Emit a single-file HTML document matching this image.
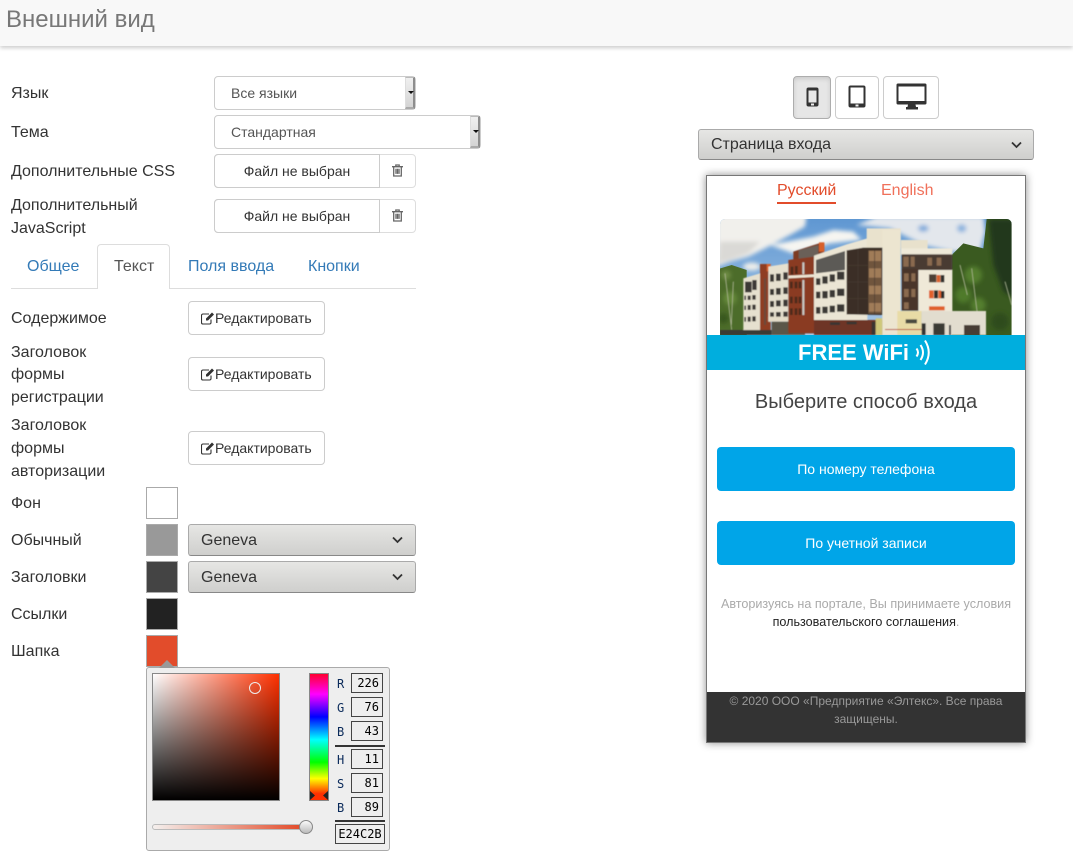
<!DOCTYPE html>
<html lang="ru"><head><meta charset="utf-8"><title>Внешний вид</title>
<style>
*{box-sizing:border-box}
html,body{margin:0;padding:0;width:1073px;height:852px;overflow:hidden;background:#fff;font-family:"Liberation Sans","DejaVu Sans",sans-serif;color:#333}
.a{position:absolute;white-space:nowrap}
.l{font-size:16px;line-height:23px;color:#333;left:11px}
.sel{position:absolute;left:214px;background:#fff;border:1px solid #ccc;border-radius:4px;height:34px;font-size:14px;line-height:32px;color:#555;padding-left:16px}
.sb{position:absolute;top:0;right:0;width:10px;height:32px;background:linear-gradient(#f0f0f0,#d4d4d4);border-right:2px solid #8d8d8d;border-bottom:2px solid #aaa;border-left:1px solid #ddd;border-top:1px solid #bbb}
.sb:after{content:"";position:absolute;left:1.5px;top:13px;border:3px solid transparent;border-top:3px solid #111;border-bottom:0}
.file{position:absolute;left:214px;width:202px;height:34px;background:#fff;border:1px solid #ddd;border-radius:4px}
.file b{position:absolute;left:0;top:-1px;height:34px;border:1px solid #ccc;border-radius:4px 0 0 4px;margin-left:-1px;font-weight:400;font-size:14px;line-height:32px;text-align:center;color:#333;width:166px}
.file svg{position:absolute;left:177px;top:9px}
.edit{position:absolute;left:188px;width:137px;height:34px;border:1px solid #ccc;border-radius:4px;font-size:14px;line-height:32px;color:#333;background:#fff;padding-left:26px}
.edit svg{position:absolute;left:12px;top:9px}
.sw{position:absolute;left:146px;width:32px;height:32px;border:1px solid #aaa}
.gs{position:absolute;background:linear-gradient(#e6e6e4,#cfcfcd);border:1px solid #aaa;border-bottom-color:#888;border-radius:3px;font-size:16px;color:#333;padding-left:12px}
.gs svg{position:absolute;right:12px;top:50%;margin-top:-4px}
.tab{position:absolute;top:258px;font-size:16px;line-height:18px;color:#337ab7}
.dev{position:absolute;top:76px;height:43px;border:1px solid #ccc;border-radius:4px;background:#fff}
.nl{position:absolute;left:337px;width:12px;font-family:"DejaVu Sans Mono",monospace;font-size:12px;line-height:14px;color:#0a2a5a}
.nb{position:absolute;left:351px;width:32px;height:20px;border:1px solid #444;background:#eee;font-family:"DejaVu Sans Mono",monospace;font-size:12px;line-height:18px;text-align:right;padding-right:3px;color:#000}
</style></head><body>

<div class="a" style="left:0;top:0;width:1073px;height:46px;background:#f8f8f8;box-shadow:0 2px 4px rgba(0,0,0,.2)"></div>
<div class="a" style="left:6px;top:6px;font-size:24px;line-height:28px;color:#777">Внешний вид</div>

<div class="a l" style="top:82px">Язык</div>
<div class="a l" style="top:121px">Тема</div>
<div class="a l" style="top:160px">Дополнительные CSS</div>
<div class="a l" style="top:194px">Дополнительный</div>
<div class="a l" style="top:217px">JavaScript</div>

<div class="sel" style="top:76px;width:202px">Все языки<span class="sb"></span></div>
<div class="sel" style="top:115px;width:267px">Стандартная<span class="sb"></span></div>

<div class="file" style="top:154px"><b>Файл не выбран</b>
<svg width="11" height="13" viewBox="0 0 13 15"><path d="M0 3h13M4.500 3V1h4v2M2 3v11h9V3M4.700 5.500v6M6.500 5.500v6M8.300 5.500v6" fill="none" stroke="#666" stroke-width="1.500"/></svg></div>
<div class="file" style="top:199px"><b>Файл не выбран</b>
<svg width="11" height="13" viewBox="0 0 13 15"><path d="M0 3h13M4.500 3V1h4v2M2 3v11h9V3M4.700 5.500v6M6.500 5.500v6M8.300 5.500v6" fill="none" stroke="#666" stroke-width="1.500"/></svg></div>

<div class="a" style="left:11px;top:288px;width:405px;height:1px;background:#ddd"></div>
<div class="a" style="left:97px;top:244px;width:73px;height:45px;background:#fff;border:1px solid #ddd;border-bottom:0;border-radius:4px 4px 0 0"></div>
<div class="tab" style="left:27px">Общее</div>
<div class="tab" style="left:114px;color:#555">Текст</div>
<div class="tab" style="left:188px">Поля ввода</div>
<div class="tab" style="left:308px">Кнопки</div>

<div class="a l" style="top:307px">Содержимое</div>
<div class="a l" style="top:341px">Заголовок</div>
<div class="a l" style="top:363px">формы</div>
<div class="a l" style="top:386px">регистрации</div>
<div class="a l" style="top:414px">Заголовок</div>
<div class="a l" style="top:437px">формы</div>
<div class="a l" style="top:460px">авторизации</div>

<div class="edit" style="top:301px"><svg width="14" height="14" viewBox="0 0 14 14"><path d="M10 8.500V11.500a1.500 1.500 0 0 1-1.500 1.500H2a1.500 1.500 0 0 1-1.500-1.500V4.500A1.500 1.500 0 0 1 2 3h6" fill="none" stroke="#333" stroke-width="1.100"/><path d="M5 7.500L11 1.500l2 2-6 6H5z" fill="#333"/></svg>Редактировать</div>
<div class="edit" style="top:357px"><svg width="14" height="14" viewBox="0 0 14 14"><path d="M10 8.500V11.500a1.500 1.500 0 0 1-1.500 1.500H2a1.500 1.500 0 0 1-1.500-1.500V4.500A1.500 1.500 0 0 1 2 3h6" fill="none" stroke="#333" stroke-width="1.100"/><path d="M5 7.500L11 1.500l2 2-6 6H5z" fill="#333"/></svg>Редактировать</div>
<div class="edit" style="top:431px"><svg width="14" height="14" viewBox="0 0 14 14"><path d="M10 8.500V11.500a1.500 1.500 0 0 1-1.500 1.500H2a1.500 1.500 0 0 1-1.500-1.500V4.500A1.500 1.500 0 0 1 2 3h6" fill="none" stroke="#333" stroke-width="1.100"/><path d="M5 7.500L11 1.500l2 2-6 6H5z" fill="#333"/></svg>Редактировать</div>

<div class="a l" style="top:492px">Фон</div>
<div class="a l" style="top:529px">Обычный</div>
<div class="a l" style="top:566px">Заголовки</div>
<div class="a l" style="top:603px">Ссылки</div>
<div class="a l" style="top:640px">Шапка</div>

<div class="sw" style="top:487px;background:#fff"></div>
<div class="sw" style="top:524px;background:#999"></div>
<div class="sw" style="top:561px;background:#444"></div>
<div class="sw" style="top:598px;background:#222"></div>
<div class="sw" style="top:635px;background:#e24c2b"></div>

<div class="gs" style="left:188px;top:524px;width:228px;height:32px;line-height:31px">Geneva<svg width="11" height="8" viewBox="0 0 11 8"><path d="M1 1.500l4.500 4.500 4.500-4.500" fill="none" stroke="#333" stroke-width="1.800"/></svg></div>
<div class="gs" style="left:188px;top:561px;width:228px;height:32px;line-height:31px">Geneva<svg width="11" height="8" viewBox="0 0 11 8"><path d="M1 1.500l4.500 4.500 4.500-4.500" fill="none" stroke="#333" stroke-width="1.800"/></svg></div>

<!-- colour picker -->
<div class="a" style="left:146px;top:667px;width:244px;height:184px;background:#eee;border:1px solid #aaa;border-radius:3px"></div>
<div class="a" style="left:159px;top:660px;width:0;height:0;border:8px solid transparent;border-top:0;border-bottom:8px solid #999"></div>
<div class="a" style="left:152px;top:673px;width:128px;height:128px;border:1px solid #888;background:linear-gradient(to top,#000,rgba(0,0,0,0)),linear-gradient(to right,#fff,#ff3000)"></div>
<div class="a" style="left:249px;top:682px;width:12px;height:12px;border:1px solid #eee;border-radius:50%"></div>
<div class="a" style="left:309px;top:673px;width:20px;height:128px;border:1px solid #888;background:linear-gradient(#ff0030,#ff00ff 16%,#0000ff 34%,#00ffff 52%,#00ff00 70%,#ffff00 83%,#ff3000 95%)"></div>
<svg class="a" style="left:310px;top:790px" width="18" height="11" viewBox="0 0 18 11"><path d="M0 1l5 4.500-5 4.500zM18 1l-5 4.500 5 4.500z" fill="#222"/></svg>
<div class="nl" style="top:677px">R</div>
<div class="nl" style="top:701px">G</div>
<div class="nl" style="top:725px">B</div>
<div class="nl" style="top:753px">H</div>
<div class="nl" style="top:777px">S</div>
<div class="nl" style="top:801px">B</div>
<div class="nb" style="top:673px">226</div>
<div class="nb" style="top:697px">76</div>
<div class="nb" style="top:721px">43</div>
<div class="nb" style="top:749px">11</div>
<div class="nb" style="top:773px">81</div>
<div class="nb" style="top:797px">89</div>
<div class="a" style="left:335px;top:745px;width:50px;height:2px;background:#333"></div>
<div class="a" style="left:335px;top:820px;width:50px;height:2px;background:#333"></div>
<div class="a" style="left:335px;top:824px;width:50px;height:20px;border:1px solid #444;font-family:'DejaVu Sans Mono',monospace;font-size:12px;line-height:18px;text-align:center;color:#000">E24C2B</div>
<div class="a" style="left:152px;top:824px;width:150px;height:6px;border:1px solid #bbb;border-radius:3px;background:linear-gradient(to right,#f4f0ee,#e24c2b)"></div>
<div class="a" style="left:299px;top:820px;width:14px;height:14px;border:1px solid #888;border-radius:50%;background:linear-gradient(#fafafa,#bbb)"></div>

<!-- device buttons -->
<div class="dev" style="left:793px;width:38px;background:#e6e6e6;border-color:#adadad;box-shadow:inset 0 2px 4px rgba(0,0,0,.12)"></div>
<div class="dev" style="left:835px;width:44px"></div>
<div class="dev" style="left:883px;width:56px"></div>
<svg class="a" style="left:806px;top:87px" width="13" height="20" viewBox="0 0 13 20"><rect x=".5" y=".5" width="12" height="19" rx="2" fill="#333"/><rect x="2.500" y="3.500" width="8" height="12" fill="#e8e8e8"/><rect x="5" y="16.500" width="3" height="2" fill="#eee"/></svg>
<svg class="a" style="left:848px;top:85px" width="18" height="23" viewBox="0 0 18 23"><rect x=".5" y=".5" width="17" height="22" rx="2" fill="#333"/><rect x="2.500" y="2.500" width="13" height="16" fill="#fff"/><rect x="7.500" y="19.500" width="3" height="2" fill="#eee"/></svg>
<svg class="a" style="left:896px;top:83px" width="31" height="27" viewBox="0 0 31 27"><path d="M2 .5h27a1.500 1.500 0 0 1 1.500 1.500v18a1.500 1.500 0 0 1-1.500 1.500H19.500l.5 2.500h2v2.500H10v-2.500h1.500l.5-2.500H2A1.500 1.500 0 0 1 .5 20V2A1.500 1.500 0 0 1 2 .5z" fill="#333"/><rect x="2.500" y="3.500" width="26" height="14.500" fill="#fff"/></svg>

<div class="gs" style="left:698px;top:129px;width:336px;height:31px;line-height:29px">Страница входа<svg style="right:11px" width="11" height="8" viewBox="0 0 11 8"><path d="M1 1.500l4.500 4.500 4.500-4.500" fill="none" stroke="#333" stroke-width="1.800"/></svg></div>

<!-- preview -->
<div class="a" style="left:706px;top:175px;width:320px;height:568px;background:#fff;border:1px solid #777;box-shadow:0 0 8px rgba(0,0,0,.45)"></div>
<div class="a" style="left:777px;top:182px;font-size:16px;line-height:18px;color:#e24c2b;border-bottom:2px solid #e24c2b;height:22px">Русский</div>
<div class="a" style="left:881px;top:182px;font-size:16px;line-height:18px;color:#f0705a">English</div>

<svg class="a" style="left:690px;top:65px" width="350" height="310" viewBox="0 0 1050 930">
<defs>
<clipPath id="ph"><path d="M105 462H950a15 15 0 0 1 15 15V810H90V477a15 15 0 0 1 15-15z"/></clipPath>
<linearGradient id="sky" x1="0" y1="0" x2="0" y2="1"><stop offset="0" stop-color="#5f97d2"/><stop offset="1" stop-color="#a9c8e6"/></linearGradient>
<filter id="b6" x="-10%" y="-10%" width="120%" height="120%"><feGaussianBlur stdDeviation="6"/></filter>
<filter id="b3" x="-10%" y="-10%" width="120%" height="120%"><feGaussianBlur stdDeviation="7"/></filter>
<filter id="b1" x="-5%" y="-5%" width="110%" height="110%"><feGaussianBlur stdDeviation="1.200"/></filter>
</defs>
<g clip-path="url(#ph)">
<rect x="90" y="462" width="875" height="348" fill="url(#sky)"/>
<!-- clouds -->
<g filter="url(#b6)">
<path d="M80 450H350L345 485 300 510 235 545 175 575 120 590 80 605z" fill="#f1f0ec"/>
<path d="M90 530H210L175 565 120 585 85 595z" fill="#dad9d6"/>
<path d="M240 540L370 515 430 495 490 500 515 525 420 535 310 565z" fill="#f6f5f1"/>
<path d="M500 480L560 455H880L885 500 870 555 790 560 700 540 600 490z" fill="#e3e7ec"/>
<ellipse cx="700" cy="490" rx="16" ry="10" fill="#7faadb"/>
<ellipse cx="815" cy="490" rx="14" ry="12" fill="#8ab2de"/>
<ellipse cx="185" cy="605" rx="26" ry="12" fill="#eeeeea"/>
</g>
<!-- trees -->
<path d="M85 612L125 600 170 615V815H85z" fill="#4c6c2a"/>
<path d="M785 570L820 535 880 550 890 462H975V815H785z" fill="#3a5a20"/>
<g filter="url(#b3)">
<circle cx="108" cy="630" r="14" fill="#6f8d44"/><circle cx="120" cy="700" r="20" fill="#668a3a"/><circle cx="100" cy="760" r="16" fill="#38561f"/>
<circle cx="850" cy="630" r="26" fill="#557f2e"/><circle cx="820" cy="690" r="24" fill="#4f7a2c"/><circle cx="865" cy="720" r="22" fill="#557f2e"/>
<path d="M895 462H975V700L940 680 910 600z" fill="#24391a"/>
<circle cx="930" cy="770" r="26" fill="#2e4c1c"/>
</g>
<g fill="none" stroke="#aeb596" stroke-width="2.500" filter="url(#b1)"><path d="M105 625l20 170M130 650l-6 130"/><path d="M845 610l20 160M810 600l22 90M945 650l20 70"/></g>

<g filter="url(#b1)">
<!-- left wing -->
<path d="M160 640L210 625V800H160z" fill="#e6e0cf"/>
<g fill="#3a3835"><rect x="165" y="650" width="20" height="32"/><rect x="187" y="645" width="13" height="30"/>
<rect x="163" y="692" width="5" height="13"/><rect x="173" y="692" width="9" height="13"/><rect x="187" y="690" width="10" height="14"/>
<rect x="163" y="722" width="5" height="13"/><rect x="173" y="720" width="9" height="15"/><rect x="187" y="719" width="10" height="15"/>
<rect x="163" y="756" width="5" height="14"/><rect x="173" y="755" width="9" height="15"/><rect x="187" y="754" width="10" height="15"/></g>
<!-- brick col -->
<rect x="210" y="597" width="32" height="203" fill="#8f3e22"/>
<rect x="230" y="597" width="12" height="22" fill="#d8612a"/>
<rect x="222" y="640" width="6" height="140" fill="#6a4a3a"/>
<!-- 2nd white -->
<path d="M235 605L295 595V770H235z" fill="#e6e0cf"/>
<g fill="#3a3835"><rect x="240" y="628" width="12" height="22"/><rect x="258" y="626" width="14" height="22"/><rect x="280" y="622" width="13" height="22"/>
<rect x="240" y="672" width="12" height="18"/><rect x="258" y="669" width="14" height="20"/><rect x="280" y="667" width="13" height="20"/>
<rect x="240" y="708" width="12" height="18"/><rect x="258" y="706" width="14" height="18"/><rect x="280" y="704" width="13" height="20"/>
<rect x="240" y="742" width="12" height="18"/><rect x="258" y="741" width="14" height="18"/><rect x="280" y="740" width="13" height="18"/></g>
<rect x="235" y="755" width="110" height="15" fill="#e4dcc8"/>
<rect x="245" y="770" width="100" height="40" fill="#5a5648"/>
<!-- brick block -->
<path d="M310 560L387 535H403V580L310 590z" fill="#7d3b22"/>
<rect x="387" y="532" width="16" height="28" fill="#d8612a"/>
<path d="M326 556L385 540V575L326 582z" fill="#6a6058"/>
<path d="M295 585L372 575V805H295z" fill="#8a3a20"/>
<path d="M295 632L372 628V636L295 640z" fill="#eee6d4"/>
<g fill="#4e2a1c"><rect x="302" y="605" width="8" height="24"/><rect x="315" y="603" width="8" height="24"/>
<rect x="300" y="650" width="8" height="20"/><rect x="314" y="650" width="8" height="20"/><rect x="326" y="650" width="8" height="20"/>
<rect x="300" y="695" width="8" height="20"/><rect x="314" y="695" width="8" height="20"/><rect x="326" y="695" width="8" height="20"/>
<rect x="300" y="730" width="8" height="20"/><rect x="314" y="730" width="8" height="20"/><rect x="326" y="730" width="8" height="20"/></g>
<rect x="337" y="592" width="6" height="36" fill="#c9ccc8"/><rect x="337" y="645" width="6" height="105" fill="#c9ccc8"/>
<!-- main white -->
<path d="M372 572L470 538 532 520V765H372z" fill="#ebe5d4"/>
<path d="M378 585L465 558V615L378 625z" fill="#5c5a56"/>
<g fill="#3a3835"><rect x="378" y="640" width="13" height="20"/><rect x="397" y="634" width="16" height="22"/><rect x="419" y="628" width="16" height="22"/><rect x="441" y="620" width="22" height="24"/>
<rect x="378" y="680" width="13" height="20"/><rect x="397" y="678" width="16" height="22"/><rect x="419" y="675" width="16" height="22"/><rect x="441" y="671" width="22" height="22"/>
<rect x="378" y="726" width="13" height="20"/><rect x="397" y="725" width="16" height="20"/><rect x="419" y="722" width="16" height="20"/><rect x="441" y="718" width="22" height="22"/></g>
<rect x="372" y="765" width="205" height="45" fill="#6e3526"/>
<g fill="#3a3530"><rect x="420" y="772" width="30" height="8"/><rect x="470" y="770" width="30" height="8"/><rect x="545" y="770" width="12" height="40"/></g>
<rect x="557" y="760" width="20" height="50" fill="#cfc87a"/>
<!-- tower -->
<rect x="530" y="490" width="102" height="60" fill="#e9e2cd"/>
<rect x="577" y="495" width="55" height="315" fill="#ece5d0"/>
<!-- glass -->
<path d="M470 556L520 548H577V750L470 748z" fill="#3a2e28"/>
<rect x="535" y="556" width="40" height="190" fill="#6f543e"/>
<g fill="#a07c58"><rect x="537" y="558" width="36" height="30"/><rect x="537" y="610" width="36" height="28"/><rect x="537" y="662" width="36" height="26"/><rect x="537" y="714" width="36" height="26"/></g>
<g fill="#4a3a30"><rect x="553" y="556" width="2" height="190"/><rect x="470" y="600" width="65" height="2"/><rect x="470" y="650" width="65" height="2"/><rect x="470" y="700" width="65" height="2"/><rect x="503" y="552" width="2" height="195"/></g>
<!-- right wing -->
<rect x="633" y="525" width="80" height="27" fill="#e8e1cc"/>
<rect x="633" y="550" width="154" height="20" fill="#efe9d8"/>
<rect x="685" y="612" width="102" height="130" fill="#efe9d8"/>
<rect x="635" y="568" width="152" height="47" fill="#4a3a33"/>
<rect x="635" y="612" width="50" height="125" fill="#4a352a"/>
<g fill="#8a6a50"><rect x="640" y="575" width="16" height="30"/><rect x="662" y="575" width="12" height="30"/><rect x="712" y="578" width="14" height="24"/><rect x="740" y="578" width="14" height="24"/>
<rect x="642" y="625" width="14" height="24"/><rect x="664" y="625" width="12" height="24"/><rect x="642" y="672" width="14" height="24"/><rect x="664" y="672" width="12" height="24"/><rect x="642" y="712" width="14" height="20"/></g>
<rect x="717" y="628" width="22" height="24" fill="#4e4036"/><rect x="740" y="630" width="11" height="22" fill="#d8612a"/><rect x="752" y="630" width="11" height="22" fill="#2e2e2a"/>
<rect x="717" y="676" width="14" height="24" fill="#e0602a"/><rect x="732" y="676" width="12" height="24" fill="#2e2e2a"/><rect x="745" y="676" width="8" height="24" fill="#e0602a"/><rect x="753" y="678" width="10" height="22" fill="#2e2e2a"/>
<rect x="717" y="724" width="47" height="12" fill="#e0602a"/>
<!-- low block -->
<rect x="622" y="738" width="73" height="72" fill="#e8dba6"/>
<rect x="695" y="738" width="193" height="72" fill="#e2ddcf"/>
<rect x="647" y="763" width="34" height="12" fill="#4a4a40"/>
<rect x="695" y="775" width="12" height="35" fill="#333"/><rect x="730" y="775" width="34" height="35" fill="#3a3a36"/><rect x="777" y="780" width="6" height="30" fill="#444"/><rect x="822" y="780" width="48" height="30" fill="#463c34"/>
<rect x="585" y="792" width="110" height="3" fill="#b84b3c"/>
<!-- ground -->
<rect x="90" y="795" width="155" height="15" fill="#3b3a34"/>
</g>
</g>
</svg>

<div class="a" style="left:707px;top:335px;width:318px;height:35px;background:#00aede"></div>
<div class="a" style="left:798px;top:339px;font-size:22px;line-height:28px;font-weight:700;color:#fff;font-family:'Liberation Sans',sans-serif">FREE WiFi</div>
<svg class="a" style="left:915px;top:339px" width="16" height="27" viewBox="0 0 16 27"><path d="M1.500 9.500q3 4 0 8M5.500 6q5 7.500 0 15M10 1.500q7.500 12 0 24" fill="none" stroke="#fff" stroke-width="2"/></svg>

<div class="a" style="left:707px;top:390px;width:318px;text-align:center;font-size:20px;line-height:24px;color:#444">Выберите способ входа</div>
<div class="a" style="left:717px;top:447px;width:298px;height:44px;background:#00a5e8;border-radius:4px;color:#fff;font-size:14px;line-height:44px;text-align:center;">По номеру телефона</div>
<div class="a" style="left:717px;top:521px;width:298px;height:44px;background:#00a5e8;border-radius:4px;color:#fff;font-size:14px;line-height:44px;text-align:center">По учетной записи</div>
<div class="a" style="left:707px;top:595px;width:318px;text-align:center;font-size:12.600px;line-height:18px;color:#aaa">Авторизуясь на портале, Вы принимаете условия<br><span style="color:#222">пользовательского соглашения</span>.</div>
<div class="a" style="left:707px;top:692px;width:318px;height:50px;background:#333"></div>
<div class="a" style="left:707px;top:693px;width:318px;text-align:center;font-size:12px;line-height:17.500px;color:#999">© 2020 ООО «Предприятие «Элтекс». Все права<br>защищены.</div>
</body></html>
